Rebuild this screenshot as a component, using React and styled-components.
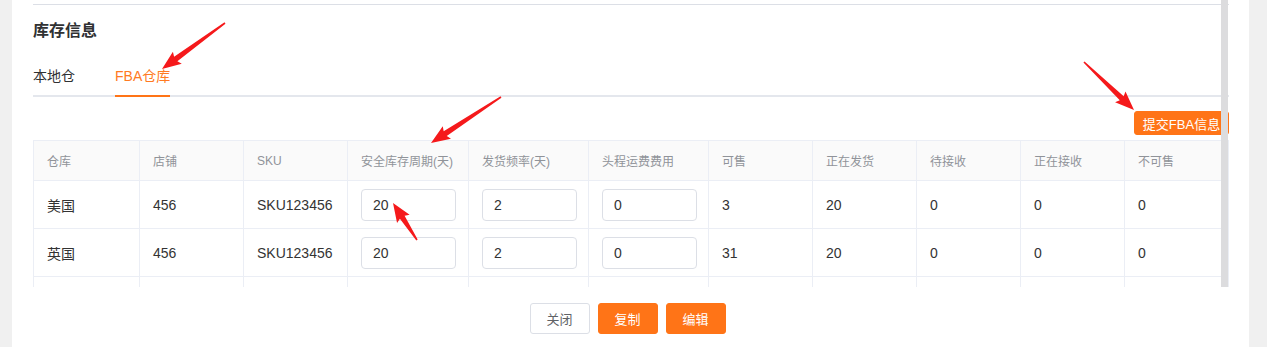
import React from "react";
import styled, { createGlobalStyle } from "styled-components";

const orange = "#ff7417";
const line = "#ebeef5";

const GlobalStyle = createGlobalStyle`
  html, body {
    margin: 0;
    padding: 0;
    background: #f0f0f0;
    font-family: "Liberation Sans", "Noto Sans CJK SC", sans-serif;
  }
`;

const Page = styled.div`
  position: relative;
  width: 1267px;
  height: 347px;
  overflow: hidden;
  background: #f0f0f0;
`;

const Panel = styled.div`
  margin-left: 12px;
  width: 1237px;
  height: 347px;
  background: #fff;
  display: flex;
  flex-direction: column;
`;

const ScrollArea = styled.div`
  position: relative;
  height: 287px;
  overflow: hidden;
  padding: 4px 20px 0 21px;
  box-sizing: border-box;
`;

const Thumb = styled.div`
  position: absolute;
  top: 0;
  bottom: 0;
  right: 21px;
  width: 7px;
  background: #dcdcde;
`;

const Section = styled.div`
  border-top: 1px solid #dcdfe6;
`;

const Title = styled.h3`
  margin: 15px 0 0;
  font-size: 16px;
  line-height: 22px;
  font-weight: bold;
  color: #303133;
`;

const Tabs = styled.div`
  margin-top: 13px;
  display: flex;
  height: 40px;
  border-bottom: 2px solid #e4e7ed;
`;

const Tab = styled.div`
  position: relative;
  display: flex;
  align-items: center;
  height: 40px;
  padding: 0 20px;
  font-size: 14px;
  color: ${(p) => (p.$active ? "#ff7a22" : "#303133")};
  &:first-child {
    padding-left: 0;
  }
  &::after {
    content: "";
    display: ${(p) => (p.$active ? "block" : "none")};
    position: absolute;
    left: 20px;
    right: 20px;
    bottom: -2px;
    height: 2px;
    background: ${orange};
  }
`;

const Toolbar = styled.div`
  display: flex;
  justify-content: flex-end;
  margin-top: 14px;
`;

const Button = styled.button`
  height: ${(p) => (p.$small ? "24px" : "31px")};
  width: ${(p) => (p.$small ? "95px" : "60px")};
  padding: 0;
  border-radius: 3px;
  font-family: inherit;
  font-size: 13px;
  border: 1px solid ${(p) => (p.$plain ? "#dcdfe6" : orange)};
  background: ${(p) => (p.$plain ? "#fff" : orange)};
  color: ${(p) => (p.$plain ? "#606266" : "#fff")};
`;

const Table = styled.table`
  margin-top: 5px;
  width: 1195px;
  table-layout: fixed;
  border-collapse: collapse;
  border-left: 1px solid ${line};
  border-top: 1px solid ${line};
`;

const TH = styled.th`
  height: 39px;
  padding: 0 13px;
  text-align: left;
  font-weight: normal;
  font-size: 12px;
  color: #909399;
  background: #fafafa;
  border-right: 1px solid ${line};
  border-bottom: 1px solid ${line};
  white-space: nowrap;
`;

const TD = styled.td`
  height: 48px;
  padding: 0 13px;
  font-size: 14px;
  color: #333;
  border-right: 1px solid ${line};
  border-bottom: 1px solid ${line};
  white-space: nowrap;
  box-sizing: border-box;
`;

const Input = styled.input`
  width: 95px;
  height: 32px;
  box-sizing: border-box;
  padding: 0 11px;
  border: 1px solid #dcdfe6;
  border-radius: 4px;
  font-family: inherit;
  font-size: 14px;
  color: #333;
  outline: none;
`;

const Footer = styled.div`
  flex: 1;
  display: flex;
  justify-content: center;
  gap: 8px;
  padding: 16px 6px 0 0;
`;

const Overlay = styled.svg`
  position: absolute;
  top: 0;
  left: 0;
  pointer-events: none;
`;

const widths = [106, 104, 104, 121, 120, 120, 104, 104, 104, 104, 104];
const headers = ["仓库", "店铺", "SKU", "安全库存周期(天)", "发货频率(天)", "头程运费费用", "可售", "正在发货", "待接收", "正在接收", "不可售"];
const rows = [
  { wh: "美国", shop: "456", sku: "SKU123456", safe: "20", freq: "2", fee: "0", sale: "3", ship: "20", wait: "0", recv: "0", no: "0" },
  { wh: "英国", shop: "456", sku: "SKU123456", safe: "20", freq: "2", fee: "0", sale: "31", ship: "20", wait: "0", recv: "0", no: "0" },
  { wh: "", shop: "", sku: "", safe: null, freq: null, fee: null, sale: "", ship: "", wait: "", recv: "", no: "" },
];

function Arrow({ from, to }) {
  const dx = to[0] - from[0];
  const dy = to[1] - from[1];
  const len = Math.sqrt(dx * dx + dy * dy);
  const ang = (Math.atan2(dy, dx) * 180) / Math.PI;
  const H = 17;
  const pts = [
    [0, -0.8], [len - H, -2.8], [len - H - 2, -7.5], [len, 0],
    [len - H - 2, 7.5], [len - H, 2.8], [0, 0.8],
  ].map((p) => p.join(",")).join(" ");
  return (
    <g transform={`translate(${from[0]} ${from[1]}) rotate(${ang})`}>
      <polygon points={pts} fill="#f5191b" />
    </g>
  );
}

export default function App() {
  return (
    <Page>
      <GlobalStyle />
      <Panel>
        <ScrollArea>
          <Section>
            <Title>库存信息</Title>
            <Tabs>
              <Tab>本地仓</Tab>
              <Tab $active>FBA仓库</Tab>
            </Tabs>
            <Toolbar>
              <Button $small>提交FBA信息</Button>
            </Toolbar>
            <Table>
              <colgroup>
                {widths.map((w, i) => <col key={i} style={{ width: w }} />)}
              </colgroup>
              <thead>
                <tr>{headers.map((h) => <TH key={h}>{h}</TH>)}</tr>
              </thead>
              <tbody>
                {rows.map((r, i) => (
                  <tr key={i}>
                    <TD>{r.wh}</TD>
                    <TD>{r.shop}</TD>
                    <TD>{r.sku}</TD>
                    <TD>{r.safe !== null && <Input defaultValue={r.safe} />}</TD>
                    <TD>{r.freq !== null && <Input defaultValue={r.freq} />}</TD>
                    <TD>{r.fee !== null && <Input defaultValue={r.fee} />}</TD>
                    <TD>{r.sale}</TD>
                    <TD>{r.ship}</TD>
                    <TD>{r.wait}</TD>
                    <TD>{r.recv}</TD>
                    <TD>{r.no}</TD>
                  </tr>
                ))}
              </tbody>
            </Table>
          </Section>
          <Thumb />
        </ScrollArea>
        <Footer>
          <Button $plain>关闭</Button>
          <Button>复制</Button>
          <Button>编辑</Button>
        </Footer>
      </Panel>
      <Overlay width="1267" height="347">
        <Arrow from={[225, 23]} to={[162, 69]} />
        <Arrow from={[501, 97]} to={[431, 143]} />
        <Arrow from={[1084, 62]} to={[1134, 110]} />
        <Arrow from={[417, 240]} to={[393, 203]} />
      </Overlay>
    </Page>
  );
}
